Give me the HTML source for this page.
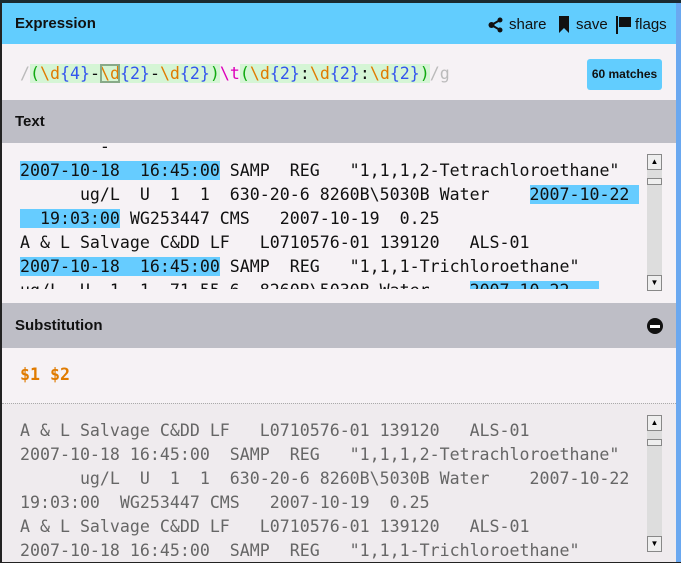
<!DOCTYPE html>
<html><head><style>
*{margin:0;padding:0;box-sizing:border-box}
body{width:681px;height:562px;overflow:hidden;background:#222;position:relative;font-family:"Liberation Sans","DejaVu Sans",sans-serif}
.a{position:absolute}
.m{font-family:"DejaVu Sans Mono","Liberation Mono",monospace;font-size:16.6px;white-space:pre;line-height:24px}
.hl{background:#66ccff}
.h{font-size:15px;color:#111;font-weight:bold}
.t{font-size:15px;color:#111}
</style></head><body>
<div class="a" style="left:2px;top:3px;width:674px;height:559px;background:#f6f2f5"></div>
<div class="a" style="left:676px;top:3px;width:5px;height:559px;background:#6aa8f0"></div>
<div class="a" style="left:0;top:0;width:681px;height:3px;background:#1a2a30"></div>
<!-- header -->
<div class="a" style="left:2px;top:3px;width:674px;height:41px;background:#62cdfe"></div>
<div class="a h" style="left:15px;top:15px">Expression</div>
<svg class="a" style="left:488px;top:17px" width="16" height="16" viewBox="0 0 16 16"><circle cx="3.5" cy="8" r="3" fill="#111"/><circle cx="12" cy="3" r="2.5" fill="#111"/><circle cx="12" cy="13" r="2.5" fill="#111"/><path d="M3.5 8L12 3M3.5 8L12 13" stroke="#111" stroke-width="2"/></svg>
<div class="a t" style="left:509px;top:16px">share</div>
<svg class="a" style="left:558px;top:16px" width="12" height="17" viewBox="0 0 12 17"><path d="M1 0H11V17L6 12L1 17Z" fill="#111"/></svg>
<div class="a t" style="left:576px;top:16px">save</div>
<svg class="a" style="left:616px;top:16px" width="16" height="18" viewBox="0 0 16 18"><rect x="0" y="0" width="2" height="18" fill="#111"/><path d="M3 1H15V11H3Z" fill="#111"/></svg>
<div class="a t" style="left:635px;top:16px">flags</div>
<!-- expression -->
<div class="a m" style="left:20px;top:62px;color:#bbb">/<span style="background:#d5f5d5"><span style="color:#1a1">(</span><span style="color:#e07b00">\d</span><span style="color:#3355ee">{4}</span><span style="color:#111">-</span><span style="color:#e07b00;outline:2px solid #8a8;outline-offset:-2px">\d</span><span style="color:#3355ee">{2}</span><span style="color:#111">-</span><span style="color:#e07b00">\d</span><span style="color:#3355ee">{2}</span><span style="color:#1a1">)</span></span><span style="color:#d0b">\t</span><span style="background:#d5f5d5"><span style="color:#1a1">(</span><span style="color:#e07b00">\d</span><span style="color:#3355ee">{2}</span><span style="color:#111">:</span><span style="color:#e07b00">\d</span><span style="color:#3355ee">{2}</span><span style="color:#111">:</span><span style="color:#e07b00">\d</span><span style="color:#3355ee">{2}</span><span style="color:#1a1">)</span></span>/g</div>
<div class="a" style="left:587px;top:59px;width:75px;height:31px;background:#62cdfe;border-radius:3px;font-size:12px;font-weight:bold;color:#111;text-align:center;line-height:31px;white-space:nowrap">60 matches</div>
<!-- Text header -->
<div class="a" style="left:2px;top:100px;width:674px;height:43px;background:#bebec6"></div>
<div class="a h" style="left:15px;top:113px">Text</div>
<div class="a" style="left:2px;top:143px;width:674px;height:160px;overflow:hidden">
<div class="a m" style="left:18px;top:-8px;color:#111">        -
<span class="hl">2007-10-18  16:45:00</span> SAMP  REG   "1,1,1,2-Tetrachloroethane"
      ug/L  U  1  1  630-20-6 8260B\5030B Water    <span class="hl">2007-10-22 </span>
<span class="hl">  19:03:00</span> WG253447 CMS   2007-10-19  0.25
A &amp; L Salvage C&amp;DD LF   L0710576-01 139120   ALS-01
<span class="hl">2007-10-18  16:45:00</span> SAMP  REG   "1,1,1-Trichloroethane"
ug/L  U  1  1  71-55-6  8260B\5030B Water    <span class="hl">2007-10-22   </span></div>
</div>
<div class="a" style="left:2px;top:289px;width:674px;height:14px;background:#f6f2f5"></div>
<div class="a" style="left:647px;top:154px;width:15px;height:137px;background:#ddd"></div>
<div class="a" style="left:647px;top:154px;width:15px;height:16px;background:#eee;border:1px solid #888;font-size:8px;text-align:center;line-height:14px">▲</div>
<div class="a" style="left:647px;top:178px;width:15px;height:7px;background:#eee;border:1px solid #888"></div>
<div class="a" style="left:647px;top:275px;width:15px;height:16px;background:#eee;border:1px solid #888;font-size:8px;text-align:center;line-height:14px">▼</div>
<!-- Substitution -->
<div class="a" style="left:2px;top:303px;width:674px;height:45px;background:#bebec6"></div>
<div class="a h" style="left:15px;top:317px">Substitution</div>
<div class="a" style="left:647px;top:318px;width:16px;height:16px;border-radius:50%;background:#111"></div>
<div class="a" style="left:650px;top:325px;width:10px;height:3px;background:#fff"></div>
<div class="a m" style="left:20px;top:363px;color:#e07b00;font-weight:bold">$1 $2</div>
<div class="a" style="left:2px;top:403px;width:674px;height:159px;background:#efebee;border-top:1px dotted #aaa"></div>
<div class="a m" style="left:20px;top:419px;color:#666">A &amp; L Salvage C&amp;DD LF   L0710576-01 139120   ALS-01
2007-10-18 16:45:00  SAMP  REG   "1,1,1,2-Tetrachloroethane"
      ug/L  U  1  1  630-20-6 8260B\5030B Water    2007-10-22
19:03:00  WG253447 CMS   2007-10-19  0.25
A &amp; L Salvage C&amp;DD LF   L0710576-01 139120   ALS-01
2007-10-18 16:45:00  SAMP  REG   "1,1,1-Trichloroethane"</div>
<div class="a" style="left:647px;top:415px;width:15px;height:137px;background:#ddd"></div>
<div class="a" style="left:647px;top:415px;width:15px;height:16px;background:#eee;border:1px solid #888;font-size:8px;text-align:center;line-height:14px">▲</div>
<div class="a" style="left:647px;top:439px;width:15px;height:7px;background:#eee;border:1px solid #888"></div>
<div class="a" style="left:647px;top:536px;width:15px;height:16px;background:#eee;border:1px solid #888;font-size:8px;text-align:center;line-height:14px">▼</div>
</body></html>
